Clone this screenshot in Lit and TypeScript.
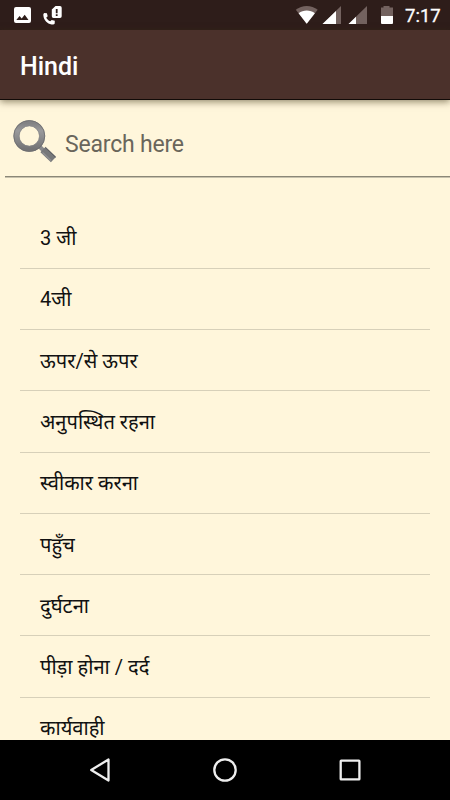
import { LitElement, html, css } from "lit";
import { customElement } from "lit/decorators.js";

const WORDS = [
  "3 जी",
  "4जी",
  "ऊपर/से ऊपर",
  "अनुपस्थित रहना",
  "स्वीकार करना",
  "पहुँच",
  "दुर्घटना",
  "पीड़ा होना / दर्द",
  "कार्यवाही",
];

@customElement("status-bar")
class StatusBar extends LitElement {
  static styles = css`
    :host {
      display: flex;
      align-items: center;
      height: 30px;
      background: #2e1d1a;
      color: #fff;
      font: 400 18.500px/30px Roboto, sans-serif;
    }
    svg { display: block; flex: none; }
    .left { margin-left: 13px; }
    .right { margin-left: auto; }
    .time { width: 35px; margin: 2px 10px 0 12px; white-space: nowrap; -webkit-text-stroke: 0.300px #fff; }
  `;
  render() {
    return html`
      <svg class="left" width="50" height="30" viewBox="0 0 50 30">
        <path fill="#fff" fill-rule="evenodd" d="M3 7h13a2 2 0 0 1 2 2v12a2 2 0 0 1-2 2H3a2 2 0 0 1-2-2V9a2 2 0 0 1 2-2zM3.300 20h12.200l-3.800-5.300-3 3.800-2.100-2.400z"/>
        <path fill="#fff" d="M31.300 13.100l2.600.1.8 3.100-1.500 1.500c.9 1.600 2.200 2.800 4 3.500l1.500-1.400 3.100.9-.1 2.800c-.5.9-1.700 1.100-3.100.9-4.500-.9-7.600-4.300-8.200-8.800-.2-1.100.1-2.100.9-2.600z"/>
        <path fill="#fff" fill-rule="evenodd" d="M42.500 6H47a1.700 1.700 0 0 1 1.700 1.700v8.600A1.700 1.700 0 0 1 47 18h-6.500a1.700 1.700 0 0 1-1.700-1.700V9.500zM42.800 9v4.200h1.800V9zM42.800 14.300v1.800h1.800v-1.800z"/>
      </svg>
      <svg class="right" width="98" height="30" viewBox="0 0 98 30">
        <path fill="#73625f" d="M.8 9.800C7 4.700 16.500 4.700 22.700 9.800L11.700 23.800z"/>
        <path fill="#fff" d="M3.600 13.300c4.600-3.800 11.700-3.800 16.300 0l-8.200 10.500z"/>
        <path fill="#73625f" d="M27.500 24L46 6v18zM53.500 24L72 6v18z"/>
        <path fill="#fff" d="M27.500 24L41 10.900V24zM53.500 24l7.500-7.300V24z"/>
        <path fill="#73625f" d="M86 7.500h2.500V6h6v1.500H98v9H86z"/>
        <path fill="#fff" d="M86 16h12v7a1 1 0 0 1-1 1H87a1 1 0 0 1-1-1z"/>
      </svg>
      <span class="time">7:17</span>
    `;
  }
}

@customElement("search-field")
class SearchField extends LitElement {
  static styles = css`
    :host {
      display: block;
      margin-left: 5px;
    }
    .field { display: flex; height: 75px; padding-left: 6px; }
    .line { height: 2px; background: linear-gradient(#8b8777 50%, #c8c2ad 50%); }
    svg { display: block; flex: none; margin-top: 17.400px; }
    .hint {
      margin: 29px 0 0 8px;
      font: 400 23px/30px Roboto, sans-serif;
      letter-spacing: -0.200px;
      color: #6a665b;
      white-space: nowrap;
    }
  `;
  render() {
    return html`
      <div class="field">
        <svg width="46" height="48" viewBox="0 0 46 48">
          <defs>
            <linearGradient id="rim" x1="0" y1="0" x2="0" y2="1">
              <stop offset="0" stop-color="#828284"/>
              <stop offset=".3" stop-color="#9a9a9c"/>
              <stop offset="1" stop-color="#747476"/>
            </linearGradient>
          </defs>
          <path d="M28.500 28.500L34 34" stroke="#8a8a8c" stroke-width="4"/>
          <path d="M32 31.500L42.500 41.500" stroke="#77787a" stroke-width="7.500"/>
          <path d="M31.500 34.500L40 42.500" stroke="#8f8f91" stroke-width="1.500"/>
          <path d="M34.500 29.800L44.500 39.300" stroke="#5c5d60" stroke-width="1"/>
          <circle cx="18.300" cy="18" r="12.900" fill="none" stroke="url(#rim)" stroke-width="5.800"/>
          <circle cx="18.300" cy="18" r="15.500" fill="none" stroke="#6c6c6e" stroke-width=".8"/>
          <circle cx="18.300" cy="18" r="10.200" fill="none" stroke="#858587" stroke-width=".7"/>
        </svg>
        <span class="hint">Search here</span>
      </div>
      <div class="line"></div>
    `;
  }
}

@customElement("nav-bar")
class NavBar extends LitElement {
  static styles = css`
    :host {
      display: flex;
      flex: none;
      align-items: center;
      justify-content: center;
      gap: 95px;
      height: 60px;
      background: #000;
    }
    svg { display: block; fill: none; stroke: #eee; stroke-width: 2.300; stroke-linejoin: round; }
  `;
  render() {
    return html`
      <svg width="30" height="30" viewBox="0 0 30 30"><path d="M23.500 4.500v21L6.200 15z"/></svg>
      <svg width="30" height="30" viewBox="0 0 30 30"><circle cx="15" cy="15" r="10.700"/></svg>
      <svg width="30" height="30" viewBox="0 0 30 30"><rect x="5.700" y="5.700" width="18.700" height="18.700" rx=".5"/></svg>
    `;
  }
}

@customElement("app-root")
class AppRoot extends LitElement {
  static styles = css`
    :host {
      display: flex;
      flex-direction: column;
      width: 450px;
      height: 800px;
      overflow: hidden;
      background: #fff6db;
    }
    status-bar, search-field { flex: none; }
    .title {
      flex: none;
      box-sizing: border-box;
      height: 70px;
      padding: 2px 20px 0;
      background: #4b312b;
      border-bottom: 1px solid #120b08;
      box-shadow: 0 2px 7px rgba(60, 50, 20, 0.550);
      color: #fff;
      font: 500 25px/70px Roboto, sans-serif;
    }
    search-field { margin-top: 1px; }
    .list {
      flex: 1;
      min-height: 0;
      overflow: hidden;
      margin: 0 20px;
      padding-top: 29.500px;
    }
    .row {
      box-sizing: border-box;
      height: 61.290px;
      padding: 0.600px 0 0 20px;
      border-bottom: 1px solid #d7d0b9;
      font: 400 20.100px/61px Roboto, "Noto Sans Devanagari", "Noto Sans", sans-serif;
      color: #111;
      white-space: nowrap;
    }
  `;
  render() {
    return html`
      <status-bar></status-bar>
      <div class="title">Hindi</div>
      <search-field></search-field>
      <div class="list">${WORDS.map((w) => html`<div class="row">${w}</div>`)}</div>
      <nav-bar></nav-bar>
    `;
  }
}
